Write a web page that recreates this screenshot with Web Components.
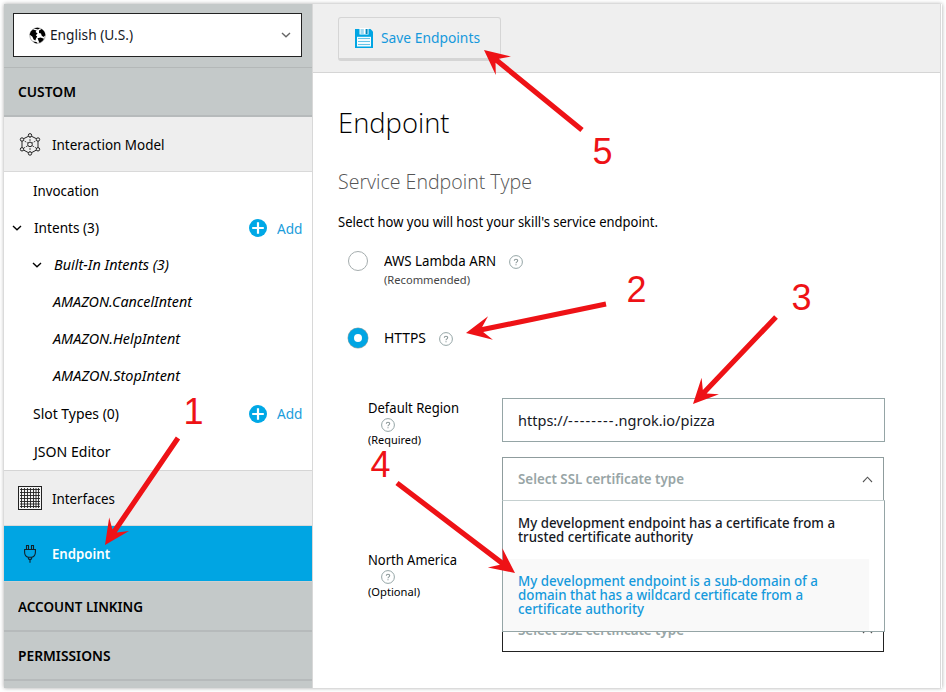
<!DOCTYPE html>
<html lang="en">
<head>
<meta charset="utf-8">
<title>Endpoint</title>
<style>
html,body{margin:0;width:946px;height:692px;overflow:hidden;background:#fff}
body{font-family:"Noto Sans","Open Sans",sans-serif;font-size:14px;color:#000}
</style>
</head>
<body>
<skill-console></skill-console>
<script>
const def=(name,html,init)=>customElements.define(name,class extends HTMLElement{
  connectedCallback(){
    if(this.shadowRoot)return;
    this.attachShadow({mode:'open'}).innerHTML=html(this);
    if(init)init(this);
  }
});

def('glyph-icon',el=>{
  const icons={
    globe:[17,17,'<circle cx="8.5" cy="8.5" r="7.7" fill="#fff" stroke="#777" stroke-width=".6"/><path fill="#000" d="M.6 7.5Q1.2 4 4 2.6L7.6 3.4 6.6 5 8.6 6.6 6.8 8.2 8.2 9.6 7 11.4 6.4 13.4 4.6 12.4 3.4 9.8ZM5 1.6Q8 .3 11 1.2L9 2.4ZM10 3.4 12.6 2Q16 4 16.4 8.2L14.4 10 12.6 8.6 12 6.6 10 6ZM8.6 11.2 11.6 10.4 15 11.8Q13.6 15 10.6 16L9.6 14ZM4 14.4 7.4 15 8.6 16.4Q5.6 16.2 4 14.4Z"/>'],
    model:[22,23,'<g fill="none" stroke="#222" stroke-width="1"><path d="M11 2.5 19 6.5V16.2L11 20.5 3 16.2V6.5Z"/><path d="M11 3V20M3 6.5 19 16.2M19 6.5 3 16.2" stroke-dasharray="2 1" stroke-width=".8"/><g fill="#eee"><circle cx="11" cy="2.3" r="1.7"/><circle cx="19" cy="6.5" r="1.7"/><circle cx="19" cy="16.3" r="1.7"/><circle cx="11" cy="20.5" r="1.7"/><circle cx="3" cy="16.3" r="1.7"/><circle cx="3" cy="6.5" r="1.7"/><circle cx="11" cy="11.4" r="2.3"/></g></g>'],
    grid:[24,24,'<rect x=".5" y=".5" width="23" height="23" fill="#f4f4f4" stroke="#222"/><path d="M3.5 2V22M6.5 2V22M9.5 2V22M12.5 2V22M15.5 2V22M20.5 2V22M18 2V22M2 3.5H22M2 6.5H22M2 9.5H22M2 12.5H22M2 15.5H22M2 18H22M2 20.5H22" stroke="#222" stroke-width=".9"/>'],
    plug:[12,19,'<path d="M2.5 5.5V1.5H4.5V5.5M7.5 5.5V1.5H9.5V5.5M.6 5.5H11.4V8Q11.4 12.7 7.5 13.3H4.5Q.6 12.7 .6 8ZM4 13.4 5 15.4H7L8 13.4M6 15.4V18.7" fill="none" stroke="#10222b" stroke-width="1.1"/>'],
    plus:[18,18,'<circle cx="9" cy="9" r="9" fill="#00a8e6"/><path d="M9 3.2V14.8M3.2 9H14.8" stroke="#fff" stroke-width="2.2"/>'],
    down:[10,6,'<path d="M1 1 5 4.7 9 1" fill="none" stroke="currentColor" stroke-width="1.4"/>'],
    up:[11,7,'<path d="M1 6 5.5 1.2 10 6" fill="none" stroke="#555" stroke-width="1.1"/>'],
    save:[18,20,'<path d="M0 1H15.5L18 3.5V20H0Z" fill="#00a5e3"/><path d="M4.5 0H13.5V6.5H4.5Z" fill="#fff"/><path d="M5.5 1H8.8V6H5.5Z" fill="#9fd9f0"/><path d="M10.6 1H12.6V6H10.6Z" fill="#0088bd"/><path d="M2 8.8H16V18.5H2Z" fill="#f3fbfe"/><path d="M3 10.5H15M3 13.5H15M3 16.5H15" stroke="#67c4e6" stroke-width="1.2"/>'],
    help:[14,14,'<circle cx="7" cy="7" r="6.4" fill="#fff" stroke="#95a5a6" stroke-width="1"/><path d="M5.3 5.8Q5.3 4.2 7 4.2 8.7 4.2 8.7 5.6 8.7 6.5 7.7 7.1 7 7.5 7 8.3M7 9.2V10.3" fill="none" stroke="#8b9899" stroke-width="1.1"/>']
  };
  const [w,h,s]=icons[el.getAttribute('name')];
  return `<style>:host{display:block;flex:none;width:${w}px;height:${h}px}svg{display:block}</style><svg width="${w}" height="${h}" viewBox="0 0 ${w} ${h}">${s}</svg>`;
});

def('nav-section',()=>`<style>:host{display:flex;align-items:center;box-sizing:border-box;height:var(--h,49px);padding-left:14px;font-weight:600;border-bottom:2px solid #b6babb}</style><slot></slot>`);

def('nav-group',el=>`<style>:host{display:flex;align-items:center;box-sizing:border-box;height:55px;background:#eee;border-bottom:1px solid #d9d9d9}
:host([active]){background:#00a5e3;border:0;color:#fff;font-weight:600}
.i{width:48px;display:flex;justify-content:center;padding-right:0;box-sizing:border-box;padding-left:4px}</style><div class="i"><glyph-icon name="${el.getAttribute('icon')}"></glyph-icon></div><slot></slot>`);

def('nav-item',el=>`<style>:host{display:flex;align-items:center;height:37px;padding-right:10px}
.c{width:var(--lead,29px);box-sizing:border-box;padding-left:var(--arrow,8px)}.g{flex:1}
.a{display:flex;align-items:center;gap:10px;color:#1b9ddb;padding-top:1px}</style>
<div class="c">${el.hasAttribute('open')?'<glyph-icon name="down"></glyph-icon>':''}</div><slot></slot><div class="g"></div>${el.hasAttribute('add')?'<div class="a"><glyph-icon name="plus"></glyph-icon><fit-text w="25.5">Add</fit-text></div>':''}`);

def('locale-select',()=>`<style>:host{display:block;border-bottom:1px solid #b4b8b8;padding:9px 10px 0 9px;box-sizing:border-box;height:64px}
.b{display:flex;align-items:center;box-sizing:border-box;height:44px;border:1px solid #222;background:#fff;padding:0 10px 0 15px;gap:4px;color:#16191f}.g{flex:1}.d{color:#666}::slotted(*){margin-bottom:2px}</style>
<div class="b"><glyph-icon name="globe"></glyph-icon><slot></slot><div class="g"></div><glyph-icon class="d" name="down"></glyph-icon></div>`);

def('side-nav',()=>`<style>:host{display:block;width:308px;height:684px;overflow:hidden;background:#c4c9c9;border-right:1px solid #d8d8d8}
.sub{background:#fff;box-sizing:border-box;height:299px;border-bottom:1px solid #d5d5d5}
i{font-style:italic;display:block}.x{height:1px;background:#cfcfcf}</style>
<locale-select><fit-text w="83">English (U.S.)</fit-text></locale-select>
<nav-section><fit-text w="58">CUSTOM</fit-text></nav-section>
<nav-group icon="model"><fit-text w="112.5">Interaction Model</fit-text></nav-group>
<div class="sub">
<nav-item><fit-text w="66">Invocation</fit-text></nav-item>
<nav-item open add style="--lead:30px"><fit-text w="65">Intents (3)</fit-text></nav-item>
<i><nav-item open style="--lead:50px;--arrow:28px"><fit-text w="115">Built-In Intents (3)</fit-text></nav-item>
<nav-item style="--lead:49px"><fit-text w="139">AMAZON.CancelIntent</fit-text></nav-item>
<nav-item style="--lead:49px"><fit-text w="127">AMAZON.HelpIntent</fit-text></nav-item>
<nav-item style="--lead:49px"><fit-text w="127">AMAZON.StopIntent</fit-text></nav-item></i>
<nav-item add style="height:38px"><fit-text w="86">Slot Types (0)</fit-text></nav-item>
<nav-item style="height:38px;--lead:30px"><fit-text w="76.5">JSON Editor</fit-text></nav-item>
</div>
<nav-group icon="grid"><fit-text w="63">Interfaces</fit-text></nav-group>
<nav-group icon="plug" active><fit-text w="58">Endpoint</fit-text></nav-group>
<div class="x"></div>
<nav-section style="--h:50px"><fit-text w="125">ACCOUNT LINKING</fit-text></nav-section>
<nav-section><fit-text w="92.5">PERMISSIONS</fit-text></nav-section>`);

def('save-bar',()=>`<style>:host{display:block;box-sizing:border-box;height:69px;background:#efefef;border-bottom:1px solid #d5d5d5;padding:13px 0 0 25px}
.b{box-sizing:border-box;width:163px;height:44px;border:1px solid #d5d5d5;border-bottom:3px solid #d5d5d5;border-radius:3px;display:flex;align-items:center;gap:8px;padding-left:16px;color:#1599dc}fit-text{margin-bottom:2px}</style>
<div class="b"><glyph-icon name="save"></glyph-icon><fit-text w="99">Save Endpoints</fit-text></div>`);

def('radio-choice',el=>`<style>:host{display:flex;height:var(--h)}.r{box-sizing:border-box;width:20px;height:20px;border:1px solid #a5adae;border-radius:50%;background:#fff;margin:0 16px 0 10px}
:host([checked]) .r{border:6px solid #00a5e3;box-shadow:0 0 0 .5px #9aa}.t{display:flex;align-items:center;gap:13px;height:20px;margin-top:-1px}.n{font-size:11.5px;color:#444;line-height:17px;padding-top:1px}glyph-icon{margin-top:4px}</style>
<div class="r"></div><div><div class="t"><slot></slot><glyph-icon name="help"></glyph-icon></div><div class="n"><slot name="note"></slot></div></div>`);

def('region-label',()=>`<style>:host{display:block;width:134px}.h{padding:1px 0 0 13px}.n{font-size:11.5px;line-height:16px}.t{line-height:18px}</style>
<div class="t"><slot></slot></div><div class="h"><glyph-icon name="help"></glyph-icon></div><div class="n"><slot name="note"></slot></div>`);

def('ssl-select',()=>`<style>:host{display:block;position:relative;height:195px;width:382px;font-weight:500;line-height:14px}
.b{box-sizing:border-box;height:44px;border:1px solid #8f9c9d;display:flex;align-items:center;justify-content:space-between;padding:0 10px 0 15px;color:#98a5a6;font-weight:600}
.under{position:absolute;left:0;top:151px;width:382px;border-color:#222}
.m{position:absolute;left:0;top:43px;width:383px;height:132px;box-sizing:border-box;border:1px solid #95a5a6;border-top-color:#c5d0d0;background:#fff;color:#16191f}
.o{box-sizing:border-box;padding:15px 0 0 15px;height:58px}.s{height:72px;width:366px;background:#f9f9f9;color:#1599dc}
fit-text{display:block}</style>
<div class="b"><fit-text w="166">Select SSL certificate type</fit-text><glyph-icon name="up"></glyph-icon></div>
<div class="b under"><fit-text w="166">Select SSL certificate type</fit-text><glyph-icon name="up"></glyph-icon></div>
<div class="m"><div class="o"><fit-text w="317">My development endpoint has a certificate from a</fit-text><fit-text w="175">trusted certificate authority</fit-text></div>
<div class="o s"><fit-text w="300">My development endpoint is a sub-domain of a</fit-text><fit-text w="285">domain that has a wildcard certificate from a</fit-text><fit-text w="126">certificate authority</fit-text></div></div>`);

def('endpoint-form',()=>`<style>:host{display:block;padding:0 0 0 25px}
h1,h2,p{margin:0;font-weight:400}h1{font:350 28px/40px "Open Sans","Noto Sans",sans-serif;padding-top:29px}
h2{font:360 19.5px/28px "Open Sans","Noto Sans",sans-serif;color:#555;padding-top:26px}p{line-height:20px;padding:16px 0 20px}
.row{display:flex;padding-left:30px}.in{box-sizing:border-box;width:383px;height:44px;border:1px solid #95a5a6;display:flex;align-items:center;padding:1px 0 0 15px;color:#16191f;margin-bottom:15px}
.in span{letter-spacing:1.1px}
.l{display:flex;flex-direction:column;justify-content:space-between;height:201px;padding-top:1px}</style>
<h1><fit-text w="111.5">Endpoint</fit-text></h1>
<h2><fit-text w="194">Service Endpoint Type</fit-text></h2>
<p><fit-text w="320">Select how you will host your skill's service endpoint.</fit-text></p>
<radio-choice style="--h:77px;margin-top:-1px"><fit-text w="112">AWS Lambda ARN</fit-text><fit-text slot="note" w="86">(Recommended)</fit-text></radio-choice>
<radio-choice checked style="--h:70px"><fit-text w="42">HTTPS</fit-text></radio-choice>
<div class="row"><div class="l"><region-label><fit-text w="91">Default Region</fit-text><fit-text slot="note" w="53">(Required)</fit-text></region-label>
<region-label><fit-text w="89">North America</fit-text><fit-text slot="note" w="52">(Optional)</fit-text></region-label></div>
<div><div class="in"><fit-text w="197">https://<span>--------</span>.ngrok.io/pizza</fit-text></div><ssl-select></ssl-select></div></div>`);

def('step-arrows',()=>{
  const arrows=[[178,438,105,545],[606,304,466,333],[776,317,693,404],[397,483,515,573],[582,130,484,50]];
  const nums=[[1,183.5,424],[2,626.5,302],[3,791.5,310],[4,370.5,477],[5,592.5,164]];
  return `<style>:host{position:absolute;inset:0;pointer-events:none}svg{display:block}text{font:36px "Liberation Sans",sans-serif}</style><svg width="946" height="692" fill="#ee1216">`+
  arrows.map(([x,y,tx,ty])=>{
    const L=Math.hypot(tx-x,ty-y),a=Math.atan2(ty-y,tx-x)*180/Math.PI;
    return `<path transform="translate(${x} ${y}) rotate(${a})" d="M0-2.6H${L-17}L${L-25}-12 ${L} 0 ${L-25} 12 ${L-17} 2.6H0Z"/>`}).join('')+
  nums.map(([n,x,y])=>`<text x="${x}" y="${y}">${n}</text>`).join('')+'</svg>';
});

def('skill-console',()=>`<style>:host{display:block;position:relative;width:946px;height:692px;padding:4px 0 0 4px;box-sizing:border-box}
.w{display:flex;box-sizing:border-box;width:938px;height:684px;background:#fff;box-shadow:0 0 4px rgba(0,0,0,.35)}
main{flex:1;border-right:1px solid #d9d9d9;margin-right:1px}</style>
<div class="w"><side-nav></side-nav><main><save-bar></save-bar><endpoint-form></endpoint-form></main></div><step-arrows></step-arrows>`);

/* Condenses its line of text horizontally to the width given in "w". */
def('fit-text',el=>`<style>:host{display:inline-block;width:${el.getAttribute('w')}px;white-space:nowrap}span{display:inline-block;transform-origin:0 50%}</style><span><slot></slot></span>`,el=>{
  const s=el.shadowRoot.querySelector('span');
  s.style.transform=`scaleX(${el.getAttribute('w')/s.getBoundingClientRect().width})`;
});
</script>
</body>
</html>
